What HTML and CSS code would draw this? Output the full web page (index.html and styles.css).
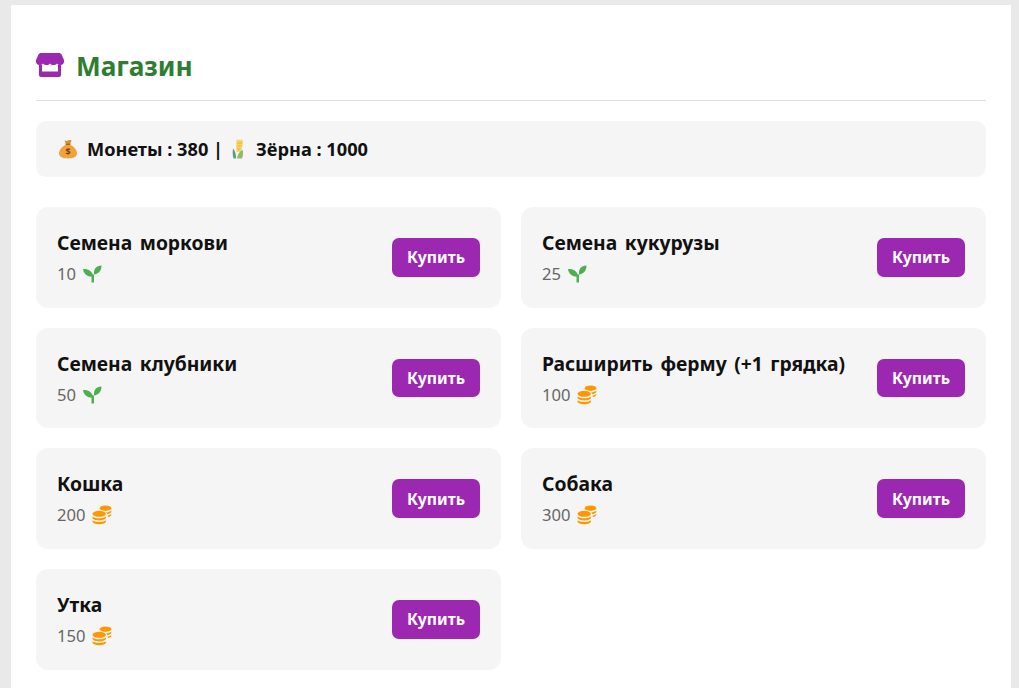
FILE: index.html
```html
<!DOCTYPE html>
<html lang="ru">
<head>
<meta charset="utf-8">
<title>Магазин</title>
<link rel="stylesheet" href="styles.css">
</head>
<body>
<svg class="defs" width="0" height="0" aria-hidden="true">
  <defs>
    <symbol id="sprout" viewBox="0 0 20 20">
      <path fill="#4caf50" d="M0 5C5 4.500 9.500 7 10.200 12.500 5 13 1 11 0 5Z"/>
      <path fill="#4caf50" d="M18.500 1.500C18.500 6.500 15.500 10 11 10.500 10.500 5 13 1.700 18.500 1.500Z"/>
      <path fill="#4caf50" d="M8.500 10.500h2.500V18.500H8.500Z"/>
    </symbol>
    <symbol id="coins" viewBox="0 0 20 20">
      <g fill="#ff9800">
        <ellipse cx="13.500" cy="3.200" rx="5.800" ry="2.700"/>
        <path d="M14 7.300c2.200-.1 4.200-.7 5.300-1.600v1.100c0 1.100-1.700 2-4 2.300-.3-.7-.7-1.300-1.300-1.800Z"/>
        <path d="M15.800 10.500c1.500-.3 2.800-.8 3.500-1.500v1.100c0 .9-1.400 1.700-3.500 2Z"/>
        <ellipse cx="7.200" cy="8.800" rx="6.700" ry="3"/>
        <path d="M.5 11.400c1.300 1.200 3.700 1.800 6.700 1.800s5.400-.6 6.700-1.800v1.400c0 1.500-3 2.600-6.700 2.600S.5 14.300.5 12.800Z"/>
        <path d="M.5 15.300c1.300 1.100 3.700 1.700 6.700 1.700s5.400-.6 6.700-1.700v1.300c0 1.600-3 2.700-6.700 2.700S.5 18.200.5 16.600Z"/>
      </g>
    </symbol>
  </defs>
</svg>
<main class="shop">
  <h1 class="title">
    <svg class="title-icon" viewBox="0 0 28 24" aria-hidden="true">
      <path fill="#9c27b0" d="M5 0H23C24 0 25 .5 25.500 1.500L28 7V8.500C28 10.500 26.500 12 24.500 12 23 12 22 11.500 21 10.500 20 11.500 19 12 17.500 12 16 12 15 11.500 14 10.500 13 11.500 12 12 10.500 12 9 12 8 11.500 7 10.500 6 11.500 5 12 3.500 12 1.500 12 0 10.500 0 8.500V7L2.500 1.500C3 .5 4 0 5 0Z"/>
      <path fill="#9c27b0" d="M3 12H6V18.500H22V12H25V22C25 23.100 24.100 24 23 24H5C3.900 24 3 23.100 3 22Z"/>
    </svg>
    <span class="title-text">Магазин</span>
  </h1>
  <div class="balance">
    <svg class="emoji" viewBox="0 0 20 20" aria-hidden="true">
      <path fill="#e0912f" d="M6.500 1.200c1 .6 2 .7 3.500.2 1.500-.5 2.500-.4 3.500-.2L12 5.500H8Z"/>
      <path fill="#f0a33c" d="M8 5.500h4c3.500 1.800 7 5.200 7 8.800 0 3.500-3.700 5.200-9 5.200S1 17.800 1 14.300c0-3.600 3.500-7 7-8.800Z"/>
      <path fill="#a9581c" d="M7.700 4.600h4.600v1.300H7.700Z"/>
      <text class="bag-sign" x="10" y="16.300" text-anchor="middle">$</text>
    </svg>
    <b class="coins-label">Монеты : 380 |</b>
    <svg class="emoji" viewBox="0 0 20 20" aria-hidden="true">
      <path fill="#f7d468" d="M9.500 .8h6c.7 2.500.5 5.500-.6 8.500-.5 1.400-1.200 2.700-2.400 3.700H9.500C9 9 9 4.500 9.500 .8Z"/>
      <path fill="#e3b23c" d="M10.500 3.500H15V4.400H10.500ZM10.500 6.500H14.500V7.400H10.500ZM10.500 9.500H13.500V10.400H10.500Z"/>
      <path fill="#5f9e78" d="M6 9.500c1.700 1.800 3 5 3.200 10H6.500C5.500 16.500 5.500 12.500 6 9.500Z"/>
      <path fill="#8bbd68" d="M15.500 10.500c.9 3 .7 6-.5 9h-5c.2-3.500 2.500-7 5.500-9Z"/>
    </svg>
    <b>Зёрна : 1000</b>
  </div>
  <section class="items">
    <article class="item"><div class="info"><h2>Семена моркови</h2><p>10 <svg class="cost-icon"><use href="#sprout"/></svg></p></div><button>Купить</button></article>
    <article class="item"><div class="info"><h2>Семена кукурузы</h2><p>25 <svg class="cost-icon"><use href="#sprout"/></svg></p></div><button>Купить</button></article>
    <article class="item"><div class="info"><h2>Семена клубники</h2><p>50 <svg class="cost-icon"><use href="#sprout"/></svg></p></div><button>Купить</button></article>
    <article class="item"><div class="info"><h2>Расширить ферму (+1 грядка)</h2><p>100 <svg class="cost-icon"><use href="#coins"/></svg></p></div><button>Купить</button></article>
    <article class="item"><div class="info"><h2>Кошка</h2><p>200 <svg class="cost-icon"><use href="#coins"/></svg></p></div><button>Купить</button></article>
    <article class="item"><div class="info"><h2>Собака</h2><p>300 <svg class="cost-icon"><use href="#coins"/></svg></p></div><button>Купить</button></article>
    <article class="item"><div class="info"><h2>Утка</h2><p>150 <svg class="cost-icon"><use href="#coins"/></svg></p></div><button>Купить</button></article>
  </section>
</main>
</body>
</html>
```
FILE: styles.css
```css
* { box-sizing: border-box; }
html, body { height: 100%; }
body {
  margin: 0;
  padding: 5px 8px 0 11px;
  background: #e9e9e9;
  font-family: "Noto Sans", "Open Sans", sans-serif;
  color: #111;
  overflow: hidden;
}
.defs { position: absolute; }
.shop {
  width: 1000px;
  background: #fff;
  padding: 25px;
  min-height: 700px;
}
.title {
  display: flex;
  align-items: center;
  gap: 13px;
  margin: 0 0 20px;
  height: 71px;
  border-bottom: 1px solid #e0e0e0;
  color: #2e7d32;
  font-size: 26.200px;
  font-weight: 700;
}
.title-icon { width: 28px; height: 24px; }
.title-text { margin-top: 2px; margin-left: -1px; }
.balance {
  display: flex;
  align-items: center;
  height: 56px;
  padding: 0 22px;
  margin-bottom: 30px;
  background: #f5f5f5;
  border-radius: 10px;
  font-size: 18.200px;
}
.balance b { font-weight: 700; }
.coins-label { margin-right: 4px; }
.emoji { width: 20px; height: 20px; margin-right: 9px; }
.bag-sign { font-size: 9px; font-weight: 700; fill: #7a3d10; }
.items {
  display: grid;
  grid-template-columns: 1fr 1fr;
  gap: 20px;
}
.item {
  display: flex;
  align-items: center;
  justify-content: space-between;
  height: 100.700px;
  padding: 0 21px;
  background: #f5f5f5;
  border-radius: 12px;
}
.info { padding-top: 1px; }
.item h2 {
  margin: 0 0 6px;
  font-size: 19.300px;
  word-spacing: 2.500px;
  line-height: 26px;
  font-weight: 700;
}
.item p {
  display: flex;
  align-items: center;
  gap: 7px;
  margin: 0;
  font-size: 16.600px;
  line-height: 24px;
  color: #666;
}
.cost-icon { width: 20px; height: 20px; }
button {
  width: 88px;
  height: 38.500px;
  border: 0;
  border-radius: 7px;
  background: #9c27b0;
  color: #fff;
  font: 700 15.800px "Noto Sans", "Open Sans", sans-serif;
}
```
